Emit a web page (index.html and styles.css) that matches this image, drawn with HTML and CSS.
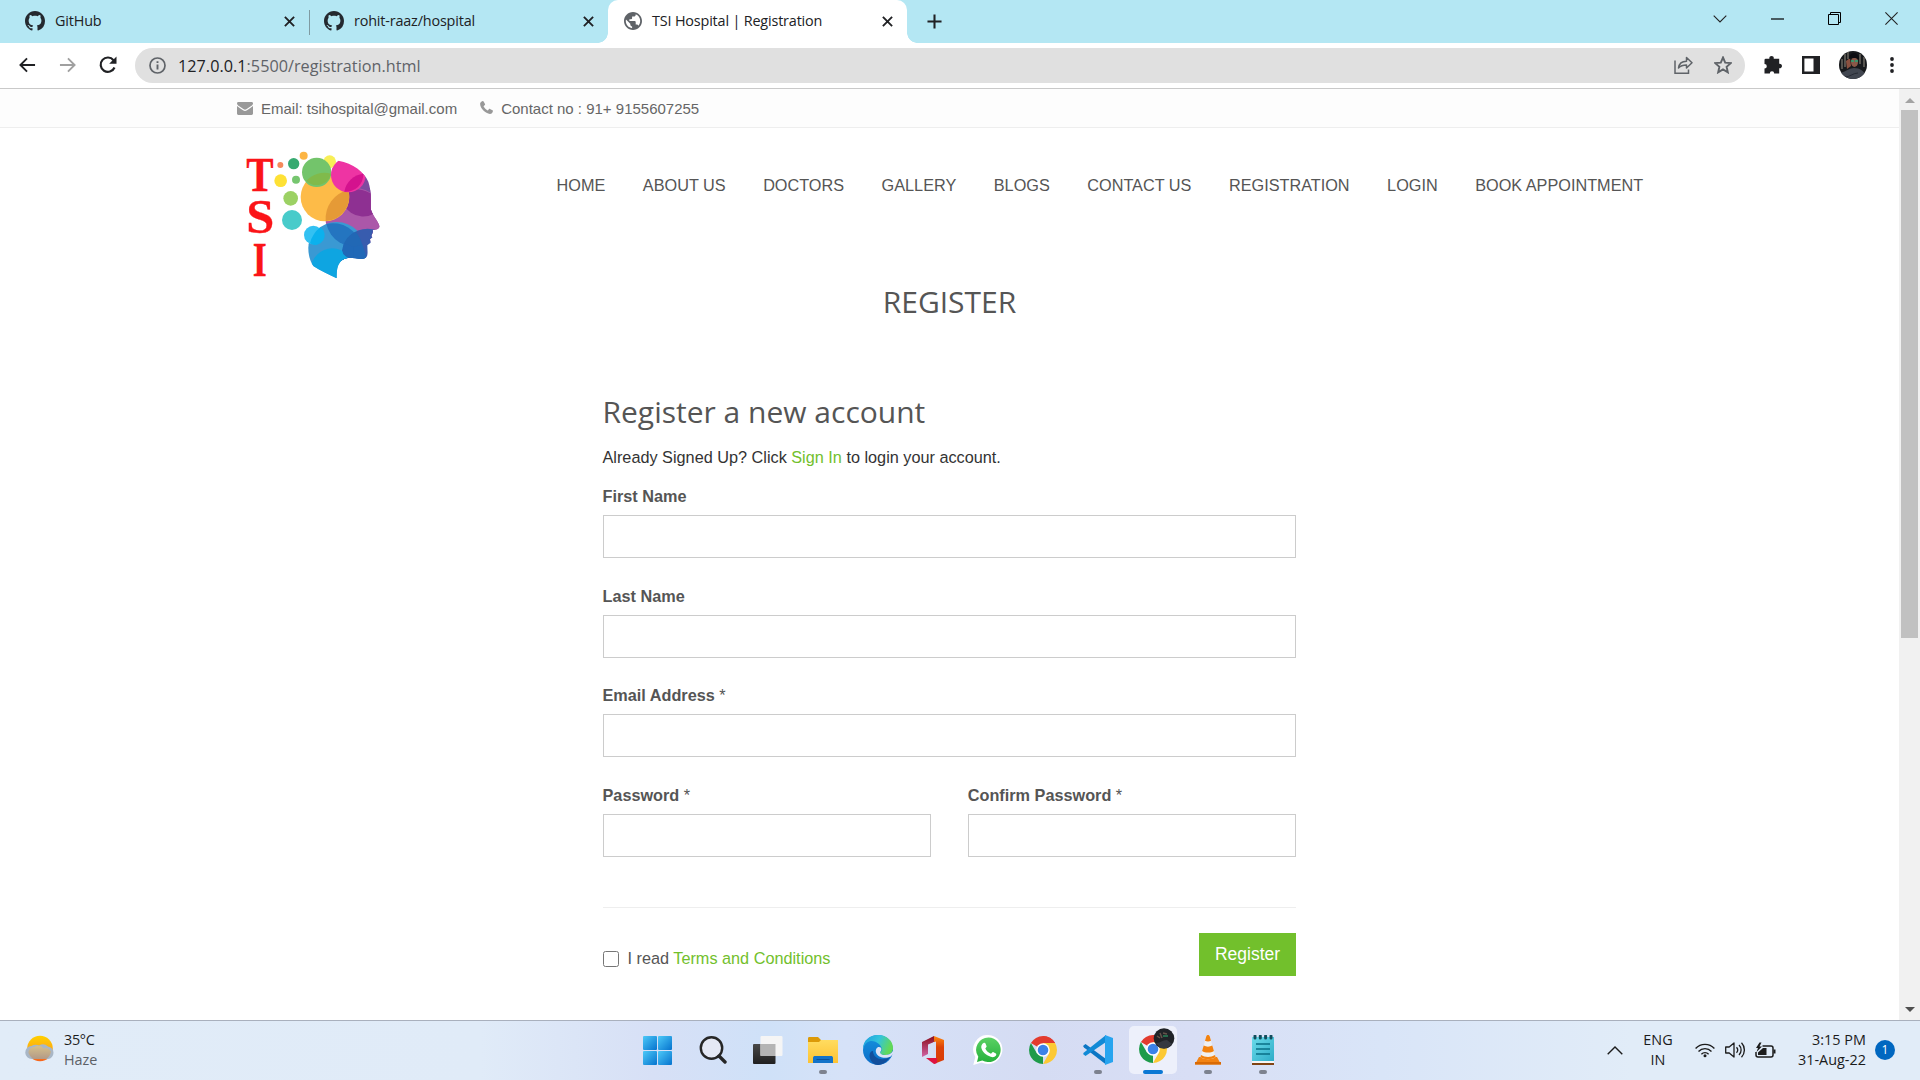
FILE: index.html
```html
<!DOCTYPE html>
<html lang="en">
<head>
<meta charset="utf-8">
<title>TSI Hospital | Registration</title>
<link rel="stylesheet" href="styles.css">
</head>
<body>
<svg class="defs" width="0" height="0" aria-hidden="true">
  <defs>
    <symbol id="github" viewBox="0 0 16 16"><path fill="#24292f" d="M8 0C3.58 0 0 3.58 0 8c0 3.54 2.29 6.53 5.47 7.59.4.07.55-.17.55-.38 0-.19-.01-.82-.01-1.49-2.01.37-2.53-.49-2.69-.94-.09-.23-.48-.94-.82-1.13-.28-.15-.68-.52-.01-.53.63-.01 1.08.58 1.23.82.72 1.21 1.87.87 2.33.66.07-.52.28-.87.51-1.07-1.78-.2-3.64-.89-3.64-3.95 0-.87.31-1.59.82-2.15-.08-.2-.36-1.02.08-2.12 0 0 .67-.21 2.2.82.64-.18 1.32-.27 2-.27s1.36.09 2 .27c1.53-1.04 2.2-.82 2.2-.82.44 1.1.16 1.92.08 2.12.51.56.82 1.27.82 2.15 0 3.07-1.87 3.75-3.65 3.95.29.25.54.73.54 1.48 0 1.07-.01 1.93-.01 2.2 0 .21.15.46.55.38A8.01 8.01 0 0 0 16 8c0-4.42-3.58-8-8-8z"/></symbol>
    <symbol id="close" viewBox="0 0 10 10"><path d="M.8.8l8.4 8.4M9.2.8L.8 9.2" stroke="#202124" stroke-width="1.7" fill="none"/></symbol>
    <symbol id="chrome" viewBox="0 0 28 28">
      <path fill="#e33b2e" d="M14 14L1.9 7A14 14 0 0 1 26.1 7z"/>
      <path fill="#1e9b4a" d="M14 14v14A14 14 0 0 1 1.9 7l6.1 10.500z"/>
      <path fill="#fcc934" d="M14 14V7h12.100A14 14 0 0 1 14 28l6-10.500z"/>
      <path fill="#e33b2e" d="M14 7h12.100A14 14 0 0 0 14 0z"/>
      <circle cx="14" cy="14" r="6.800" fill="#fff"/><circle cx="14" cy="14" r="5.300" fill="#3b82e8"/>
    </symbol>
    <linearGradient id="winG" x1="0" y1="0" x2="1" y2="1"><stop offset="0" stop-color="#4cc9f8"/><stop offset="1" stop-color="#0673ce"/></linearGradient>
    <linearGradient id="folderG" x1="0" y1="0" x2="0" y2="1"><stop offset="0" stop-color="#ffdc60"/><stop offset="1" stop-color="#fdc232"/></linearGradient>
    <linearGradient id="edgeA" x1="0" y1="0" x2="1" y2=".3"><stop offset="0" stop-color="#1d9de0"/><stop offset=".55" stop-color="#33c4dc"/><stop offset="1" stop-color="#62d957"/></linearGradient>
    <linearGradient id="edgeB" x1="0" y1="0" x2="0" y2="1"><stop offset="0" stop-color="#1593de"/><stop offset="1" stop-color="#0c6cc8"/></linearGradient>
    <linearGradient id="officeA" x1="0" y1="0" x2="0" y2="1"><stop offset="0" stop-color="#8c0d1c"/><stop offset="1" stop-color="#d064a6"/></linearGradient>
    <linearGradient id="officeB" x1="0" y1="0" x2="0" y2="1"><stop offset="0" stop-color="#ff8a10"/><stop offset=".4" stop-color="#dd4208"/><stop offset="1" stop-color="#d93b06"/></linearGradient>
    <linearGradient id="waG" x1="0" y1="0" x2="0" y2="1"><stop offset="0" stop-color="#5bd164"/><stop offset="1" stop-color="#26b13c"/></linearGradient>
    <linearGradient id="sunG" x1="0" y1="0" x2="0" y2="1"><stop offset="0" stop-color="#ffd000"/><stop offset=".5" stop-color="#fdae10"/><stop offset="1" stop-color="#f7621c"/></linearGradient>
    <linearGradient id="cloudG" x1="0" y1="0" x2="0" y2="1"><stop offset="0" stop-color="#d6c08a"/><stop offset="1" stop-color="#b29a88"/></linearGradient>
    <linearGradient id="darkG" x1="0" y1="0" x2="0" y2="1"><stop offset="0" stop-color="#484848"/><stop offset="1" stop-color="#202020"/></linearGradient>
    <linearGradient id="noteG" x1="0" y1="0" x2="1" y2="1"><stop offset="0" stop-color="#6bdbea"/><stop offset="1" stop-color="#2eacc8"/></linearGradient>
  </defs>
</svg>

<header class="tabs">
  <div class="tab tab-first"><svg class="fav"><use href="#github"/></svg><span class="tab-title">GitHub</span><svg class="x"><use href="#close"/></svg></div>
  <div class="tab tab-second"><svg class="fav"><use href="#github"/></svg><span class="tab-title">rohit-raaz/hospital</span><svg class="x"><use href="#close"/></svg></div>
  <div class="tab tab-active">
    <svg class="fav globe" viewBox="2 2 20 20"><path fill="#5f6368" d="M12 2C6.480 2 2 6.480 2 12s4.480 10 10 10 10-4.480 10-10S17.520 2 12 2zm-1 17.930c-3.950-.49-7-3.850-7-7.930 0-.62.08-1.210.21-1.790L9 15v1c0 1.100.9 2 2 2v1.930zm6.900-2.540c-.26-.81-1-1.390-1.900-1.390h-1v-3c0-.55-.45-1-1-1H8v-2h2c.55 0 1-.45 1-1V7h2c1.100 0 2-.9 2-2v-.41c2.930 1.190 5 4.060 5 7.410 0 2.080-.8 3.970-2.100 5.390z"/></svg>
    <span class="tab-title">TSI Hospital | Registration</span><svg class="x"><use href="#close"/></svg>
  </div>
  <svg class="new-tab" viewBox="0 0 16 16"><path d="M8 .5v15M.5 8h15" stroke="#202124" stroke-width="2.200"/></svg>
  <div class="win-buttons">
    <svg width="14" height="8" viewBox="0 0 14 8"><path d="M.7.7L7 7l6.300-6.300" fill="none" stroke="#222" stroke-width="1.100"/></svg>
    <svg width="13" height="2" viewBox="0 0 13 2"><path d="M0 1h13" stroke="#000" stroke-width="1.200"/></svg>
    <svg width="13" height="13" viewBox="0 0 13 13"><path d="M.5 2.500h10v10H.5zM2.500 2.500v-2h10v10h-2" fill="none" stroke="#000"/></svg>
    <svg width="13" height="13" viewBox="0 0 13 13"><path d="M.4.4l12.200 12.200M12.600.4L.4 12.600" stroke="#222" stroke-width="1.100"/></svg>
  </div>
</header>

<div class="toolbar">
  <div class="nav-icons">
    <svg width="17" height="16" viewBox="0 0 18 16" fill="none" stroke="#202124" stroke-width="2"><path d="M17 8H2M8.500 1L1.500 8l7 7"/></svg>
    <svg width="17" height="16" viewBox="0 0 18 16" fill="none" stroke="#a0a0a0" stroke-width="2"><path d="M1 8h15M9.500 1l7 7-7 7"/></svg>
    <svg width="18" height="18" viewBox="0 0 18 18"><path d="M15.500 11.500A7.200 7.200 0 1 1 14.500 4.200" fill="none" stroke="#202124" stroke-width="2.200"/><path d="M17.500.5v7.300h-7.300z" fill="#202124"/></svg>
  </div>
  <div class="address">
    <svg class="info" viewBox="0 0 17 17"><circle cx="8.500" cy="8.500" r="7.500" fill="none" stroke="#5f6368" stroke-width="1.700"/><path d="M8.500 7.500v5M8.500 4.200v1.900" stroke="#5f6368" stroke-width="1.900"/></svg>
    <span class="url"><b>127.0.0.1</b>:5500/registration.html</span>
    <svg class="share" viewBox="0 0 19 18" fill="none" stroke="#5f6368" stroke-width="1.500"><path d="M1 4.500v12.700h13.500v-3.700"/><path d="M4.500 12c.6-4.300 3.500-6.700 8-6.700V1.500l5.500 5.300-5.500 5.200V9c-3.500 0-6 .8-8 3z" stroke-linejoin="round"/></svg>
    <svg class="star" viewBox="0 0 18 18" fill="none" stroke="#5f6368" stroke-width="1.900"><path d="M9 1.500l2.200 5.100 5.600.5-4.200 3.700 1.200 5.500L9 13.400l-4.800 2.900 1.200-5.500-4.200-3.700 5.600-.5z"/></svg>
  </div>
  <div class="extras">
    <svg width="18" height="18" viewBox="0 0 18 18"><path fill="#202124" d="M1.800 2.700H5.400a2.200 2.200 0 1 1 4.300 0h5.500v5a2.300 2.300 0 1 1 0 4.500v5.300h-5a2.200 2.200 0 0 0-4.400 0H.5v-4.900a2.300 2.300 0 0 0 0-4.600V4a1.300 1.300 0 0 1 1.300-1.300z"/></svg>
    <svg width="18" height="18" viewBox="0 0 18 18"><path d="M1.200 1.200h15.600v15.600H1.200z" fill="#fff" stroke="#202124" stroke-width="2.400"/><path d="M11.500 0H18v18h-6.500z" fill="#202124"/></svg>
    <svg width="28" height="28" viewBox="0 0 28 28"><clipPath id="av"><circle cx="14" cy="14" r="14"/></clipPath><g clip-path="url(#av)"><path fill="#17191c" d="M0 0h28v28H0z"/><path d="M3 8v10M6 3v13M9 1v7M21 3v10M25 6v10" stroke="#77736a" stroke-width="1.300"/><path d="M7 10l4-3 1 8-4 3z" fill="#8b5140"/><ellipse cx="15.500" cy="11" rx="3.500" ry="5" fill="#8a5848"/><path d="M10 8c0-8 11-8 10 1-3-3-7-2-10-1z" fill="#0d0d12"/><path d="M12 10h3M16 10h3" stroke="#25a776" stroke-width="1.500"/><path d="M1 22c7-2 10-5 14-5 6 0 10 3 13 9l-3 3H7z" fill="#414650"/><path d="M6 26c5 0 8-4 13-4" stroke="#272b34" fill="none"/></g></svg>
    <svg class="dots" width="4" height="16" viewBox="0 0 4 16" fill="#202124"><circle cx="2" cy="2" r="1.900"/><circle cx="2" cy="8" r="1.900"/><circle cx="2" cy="14" r="1.900"/></svg>
  </div>
</div>

<div class="viewport">
  <div class="page">
    <div class="contact-bar">
      <svg class="mail" viewBox="0 0 16 13" fill="#999"><path d="M0 1.400C0 .6.600 0 1.400 0h13.200c.8 0 1.400.6 1.400 1.400 0 .8-.5 1.500-1.200 2L9.300 7.300c-.9.600-1.700.6-2.600 0L1.200 3.400C.5 2.900 0 2.200 0 1.400z"/><path d="M0 4c2 1.500 4 2.800 6 4.300 1.300.9 2.700.9 4 0C12 6.800 14 5.500 16 4v7.600c0 .8-.6 1.400-1.400 1.400H1.400C.6 13 0 12.400 0 11.600z"/></svg>
      <span class="contact-mail">Email: tsihospital@gmail.com</span>
      <svg class="phone" viewBox="0 0 13 13"><path fill="#999" d="M2.700.1c.4-.2.700 0 .9.400L5 3c.2.500.1.800-.2 1.100l-1 .9c-.2.300-.2.500 0 .8.900 1.500 2 2.600 3.500 3.500.3.200.6.200.8-.1l.9-1.100c.3-.3.600-.4 1-.2l2.500 1.400c.4.200.5.500.4.900-.3 1.600-1.300 2.700-3 2.700C5.500 12.500.3 7.500.1 3 .1 1.700 1.100.6 2.700.1z"/></svg>
      <span>Contact no : 91+ 9155607255</span>
    </div>
    <div class="site-header">
      <svg class="logo" viewBox="0 0 600 480">
        <g fill="#fb1418" stroke="#fb1418" stroke-width="1" font-family="'Liberation Serif', serif" font-weight="700" text-anchor="middle">
          <text x="120" y="182" font-size="146" textLength="82" lengthAdjust="spacingAndGlyphs">T</text>
          <text x="121" y="308" font-size="144" textLength="84" lengthAdjust="spacingAndGlyphs">S</text>
          <text x="119" y="437" font-size="146" textLength="42" lengthAdjust="spacingAndGlyphs">I</text>
        </g>
        <clipPath id="head"><path d="M200 50L355 92C400 100 432 125 445 155C455 185 452 210 453 240C460 260 476 275 479 290C476 297 468 299 458 300L459 305L454 318L457 322L450 328L452 338L442 346C442 368 448 386 425 387C400 385 380 380 366 391C350 404 350 425 350 445C325 432 300 422 280 408C268 390 264 370 265 345L240 280z"/></clipPath>
        <circle cx="181" cy="105" r="9" fill="#f58a5b"/><circle cx="221" cy="101" r="17" fill="#36aa70"/><circle cx="251" cy="77" r="12" fill="#fcb544"/>
        <circle cx="182" cy="152" r="19" fill="#fee135"/><circle cx="228" cy="149" r="12" fill="#76c66f"/><circle cx="212" cy="205" r="22" fill="#9cd164"/><circle cx="216" cy="270" r="30" fill="#48cbca"/>
        <circle cx="329" cy="95" r="19" fill="#f8ef57"/>
        <g clip-path="url(#head)">
          <path fill="#a855a8" d="M385 180H480V320H400z"/>
          <circle cx="426" cy="195" r="65" fill="#7e4b9f"/>
          <circle cx="404" cy="262" r="88" fill="#ab57a9"/>
          <path fill="#8e3092" d="M365 187A88 88 0 0 1 460 196V252A65 65 0 0 1 365 187z"/>
        </g>
        <circle cx="315" cy="201" r="73" fill="#fdbb48"/>
        <path fill="#e59a36" d="M317 273A88 88 0 0 1 385 180A73 73 0 0 1 317 273z"/>
        <circle cx="290" cy="127" r="44" fill="#73c46b"/>
        <path fill="#80ba4b" d="M259 152A73 73 0 0 1 333 131A44 44 0 0 1 259 152z"/>
        <g clip-path="url(#head)">
          <circle cx="385" cy="135" r="52" fill="#ee34a3"/>
          <path fill="#d4128e" d="M373 185A65 65 0 0 1 430 131A52 52 0 0 1 373 185z"/>
          <circle cx="350" cy="363" r="87" fill="#3a99d3"/>
          <path fill="#2475c0" d="M319 282A87 87 0 0 1 424 348A88 88 0 0 1 319 282z"/>
          <circle cx="443" cy="372" r="76" fill="#385cae"/>
          <path fill="#2068b7" d="M369 352Q402 354 427 343L436 370L440 392H360z"/>
          <path fill="#2168b5" d="M368 353Q376 318 407 305Q420 320 427 344Q400 354 368 353z"/>
          <circle cx="337" cy="420" r="65" fill="#0ea5e1"/>
          <path fill="#2068b7" d="M367 363Q368 352 372 340L400 350V392H362Q378 384 388 386Q368 376 367 363z"/>
        </g>
        <circle cx="280" cy="315" r="28" fill="#33c1f2"/><path fill="#0bb1ed" d="M270 340A87 87 0 0 1 301 292A28 28 0 0 1 270 340z"/>
      </svg>
      <nav class="menu"><a>HOME</a><a>ABOUT US</a><a>DOCTORS</a><a>GALLERY</a><a>BLOGS</a><a>CONTACT US</a><a>REGISTRATION</a><a>LOGIN</a><a>BOOK APPOINTMENT</a></nav>
    </div>
    <h1>REGISTER</h1>
    <form class="register">
      <h2>Register a new account</h2>
      <p>Already Signed Up? Click <a>Sign In</a> to login your account.</p>
      <div class="field"><label>First Name</label><input type="text"></div>
      <div class="field"><label>Last Name</label><input type="text"></div>
      <div class="field"><label>Email Address <i>*</i></label><input type="text"></div>
      <div class="pair">
        <div class="field"><label>Password <i>*</i></label><input type="password"></div>
        <div class="field"><label>Confirm Password <i>*</i></label><input type="password"></div>
      </div>
      <div class="actions">
        <label class="terms"><input type="checkbox"><span>I read <a>Terms and Conditions</a></span></label>
        <button type="button">Register</button>
      </div>
    </form>
  </div>
  <div class="scrollbar"><span class="arrow up"></span><span class="thumb"></span><span class="arrow down"></span></div>
</div>

<footer class="taskbar">
  <div class="weather">
    <svg width="30" height="28" viewBox="0 0 30 28"><circle cx="15" cy="13.500" r="12.800" fill="url(#sunG)"/><path fill="#a8b6c6" d="M7 24a6.500 6.500 0 0 1-.5-13 8 8 0 0 1 7.500-.500 7.500 7.500 0 0 1 9 1 6.300 6.300 0 0 1 0 12.500z"/><path fill="url(#cloudG)" d="M3.500 18c0-4 3-6 6-6 3-2.500 8-1 9 1.500 3-1.500 6 .5 7.500 3a12 12 0 0 1-4.500 7.500H8A12 12 0 0 1 3.500 18z"/></svg>
    <div><div>35°C</div><div class="muted">Haze</div></div>
  </div>
  <div class="apps">
    <div class="app"><svg width="29" height="29" viewBox="0 0 29 29" fill="url(#winG)"><rect width="14" height="14" rx="1"/><rect x="15" width="14" height="14" rx="1"/><rect y="15" width="14" height="14" rx="1"/><rect x="15" y="15" width="14" height="14" rx="1"/></svg></div>
    <div class="app"><svg width="28" height="28" viewBox="0 0 28 28" fill="none" stroke="#262626"><circle cx="12.500" cy="12" r="10.700" fill="#e4e8f4" stroke-width="2.400"/><path d="M20 20l6 6" stroke-width="3.400" stroke-linecap="round"/></svg></div>
    <div class="app"><svg width="30" height="28" viewBox="0 0 30 28"><rect y="8" width="22.500" height="20" rx="1" fill="url(#darkG)"/><rect x="7.500" y="0" width="22" height="20" rx="1" fill="#f5f5f5"/><path d="M7.500 8h15v12h-15z" fill="#b4b4b4"/></svg></div>
    <div class="app running"><svg width="30" height="28" viewBox="0 0 30 28"><path fill="#dc9a08" d="M0 2.500C0 1.500.5 1 1.500 1H10l3 3h16c.6 0 1 .4 1 1v5H0z"/><path fill="url(#folderG)" d="M0 6h11l2-2h17v23H0z"/><path fill="#1373c9" d="M5 27v-5c0-1.500 1-2 2-2h16c1 0 2 .5 2 2v5z"/><path d="M8.500 23.500h13" stroke="#0a529b"/></svg></div>
    <div class="app"><svg width="30" height="30" viewBox="0 0 30 30"><circle cx="15" cy="15" r="15" fill="url(#edgeB)"/><path fill="#124f9c" d="M10 16c0 6 6 9 11 8 3 0 5-1.500 6.500-3C24 28 18 31 12 29.500 4 24 6 16 10 16z"/><path fill="url(#edgeA)" d="M0 14C0 5 7 0 15 0c9 0 15 6 15 13 0 5-4 7-8 7-3 0-5-1-5-2 0-.800 1.800-1.400 1.800-4C18.800 9 5-1 0 14z"/><path fill="#dce2f6" d="M17.500 16.500C16.500 18 17.800 20 22 20c3 0 6-1 8-4v3l-2.300 2.500C23 24 14.500 23 13 17.500c-.8-3 .8-5.500 3-5.500 3 0 2.700 3 1.500 4.500z"/></svg></div>
    <div class="app"><svg width="24" height="28" viewBox="0 0 24 28"><path fill="url(#officeA)" d="M1 6L13 0v6l-6 2.500V18l-6 3z"/><path fill="url(#officeB)" d="M13 0l10 4v20l-10 4z"/><path fill="#d6dcf4" d="M12 6.500l3-1V22H12z"/><path fill="#de1240" d="M5 22h11v5l-3 1z"/></svg></div>
    <div class="app"><svg width="30" height="30" viewBox="0 0 30 30"><path fill="#fff" d="M15.500 0a14.500 14.500 0 1 1-7 27.500L.3 30l2-8A14.500 14.500 0 0 1 15.500 0z"/><path fill="url(#waG)" d="M15.500 2.500a12.300 12.300 0 1 1-6.200 23L4 27l1.300-5.300A12.300 12.300 0 0 1 15.500 2.500z"/><path fill="#fff" d="M10.500 8c1-.5 1.700-.2 2 .6l1.100 2.700c.2.600-.8 1.600-1.300 2.200 1.200 2.500 3 4.200 5.700 5.200.7-.6 1.500-2 2.100-1.700l2.800 1.400c.7.500.4 1.700-.1 2.400-1 1.300-3 1.700-5 1-5-1.500-8.500-5-9.500-9-.3-2 .7-4 2.200-4.800z"/></svg></div>
    <div class="app"><svg width="28" height="28"><use href="#chrome"/></svg></div>
    <div class="app running"><svg width="30" height="30" viewBox="0 0 30 30"><path fill="#0b76c4" d="M0 11l2.500-2L23 24v5.500L1 12.500z"/><path fill="#118ad6" d="M0 19l2.500 2L23 7V0L1 17.500z"/><path fill="#27a4ef" d="M22 0l8 3v24l-8 3z"/></svg></div>
    <div class="app current"><div class="tile"><svg width="36" height="38" viewBox="0 0 36 38"><use href="#chrome" x="0" y="7" width="28" height="28"/><circle cx="25" cy="10.500" r="10.300" fill="#202327"/><path d="M18 8l3 2M21 5l2 5M24 5l4 1" stroke="#65544b" stroke-width="1.500"/><path d="M24 8h5" stroke="#2b9b67" stroke-width="1.200"/><path d="M17 15c5 0 6-3 11-3l5 4-5 4h-7z" fill="#343840"/></svg></div></div>
    <div class="app running"><svg width="26" height="30" viewBox="0 0 26 30"><path fill="#f28313" d="M4 22h18l4 7.500H0z"/><path fill="#d96a05" d="M0 27h26v2.500H0z"/><path fill="#f0f0f0" d="M13 0c1 0 1.500.5 1.700 1.300L20.500 22c-3 3-12 3-15 0L11.300 1.300C11.500.5 12 0 13 0z"/><path fill="#f2820f" d="M11.300 1.300c.5-1.700 2.900-1.700 3.400 0l1.300 4.500c-1.600 1-4.400 1-6 0zM8.700 10.500c2.500 1.500 6 1.500 8.600 0l1.600 5.500c-3 2-8.800 2-11.800 0zM6 20l-.5 2c3 3 12 3 15 0l-.5-2c-4 2.500-10 2.500-14 0z"/></svg></div>
    <div class="app running"><svg width="24" height="30" viewBox="0 0 24 30"><path fill="#804414" d="M1 27h22v3H1z"/><path fill="#f5f5f5" d="M1 25h22v3H1z"/><path fill="url(#noteG)" d="M1 2h22v24H1z"/><path d="M5 9h14M5 14h14M5 19h14" stroke="#096f86" stroke-width="1.700"/><path d="M4 1v2M9.300 1v2M14.600 1v2M20 1v2" stroke="#124d5c" stroke-width="3" stroke-linecap="round"/></svg></div>
  </div>
  <div class="tray">
    <svg class="chev" width="16" height="9" viewBox="0 0 16 9"><path d="M.7 8.300L8 1l7.300 7.300" fill="none" stroke="#1c1c1c" stroke-width="1.400"/></svg>
    <div class="lang">ENG<br>IN</div>
    <svg class="wifi" width="20" height="16" viewBox="0 0 20 16" fill="none" stroke="#1c1c1c" stroke-width="1.400"><path d="M.6 6.400a13 13 0 0 1 18.800 0M3.500 9.400a9 9 0 0 1 13 0M6.400 12.200a5 5 0 0 1 7.200 0"/><circle cx="10" cy="13.800" r="1.500" fill="#1c1c1c" stroke="none"/></svg>
    <svg class="vol" width="20" height="18" viewBox="0 0 20 18" fill="none" stroke="#1c1c1c" stroke-width="1.300"><path d="M.7 6h3.500L9 2v14l-4.800-4H.7z" stroke-linejoin="round"/><path d="M11.500 6.300a4 4 0 0 1 0 5.400M14 4a7 7 0 0 1 0 10M16.500 1.800a10.500 10.500 0 0 1 0 14.400"/></svg>
    <svg class="bat" width="21" height="17" viewBox="0 0 21 17"><path d="M7.500 4H16a2 2 0 0 1 2 2v7a2 2 0 0 1-2 2H3a2 2 0 0 1-2-2v-3" fill="none" stroke="#1c1c1c" stroke-width="1.500"/><path d="M8 6h3.500v7H3v-2.500zM18.500 7.500h2v4h-2zM4.500.5L1 6h2L1.500 10 7 4.500H4.500l2-4z" fill="#1c1c1c"/></svg>
    <div class="clock">3:15 PM<br>31-Aug-22</div>
    <span class="badge">1</span>
  </div>
</footer>
</body>
</html>
```

FILE: styles.css
```css
* { box-sizing: border-box; }
body {
  margin: 0;
  width: 1920px;
  height: 1080px;
  overflow: hidden;
  display: flex;
  flex-direction: column;
  background: #fff;
  font-family: "Liberation Sans", Arial, sans-serif;
  font-size: 16.25px;
  color: #555;
}
svg { display: block; flex: none; }
.defs { position: absolute; }

/* tab strip */
.tabs {
  height: 43px;
  flex: none;
  display: flex;
  background: #b4e7f3;
  font: 14.4px/42px "Open Sans", "Noto Sans", sans-serif;
  color: #202124;
}
.tab { display: flex; align-items: center; height: 42px; }
.tab-first { width: 309px; padding: 0 14px 0 25px; }
.tab-second {
  width: 299px;
  padding: 0 14px 0 15px;
  background: linear-gradient(#7f9ba2, #7f9ba2) 0 10px / 1px 25px no-repeat;
}
.tab-active {
  position: relative;
  width: 299px;
  height: 43px;
  padding: 0 14px 1px 16px;
  background: #fff;
  border-radius: 10px 10px 0 0;
}
.tab-active::before, .tab-active::after {
  content: "";
  position: absolute;
  bottom: 0;
  width: 10px;
  height: 10px;
}
.tab-active::before { left: -10px; background: radial-gradient(circle at 0 0, #b4e7f3 9.5px, #fff 10px); }
.tab-active::after { right: -10px; background: radial-gradient(circle at 100% 0, #b4e7f3 9.5px, #fff 10px); }
.fav { width: 20px; height: 20px; }
.globe { width: 18px; height: 18px; }
.tab-title { flex: 1; margin-left: 10px; letter-spacing: -0.17px; }
.tab .x { width: 11px; height: 11px; }
.new-tab { width: 15px; height: 15px; margin: 14px 0 0 20px; }
.win-buttons { margin-left: auto; display: flex; align-items: center; gap: 44px; height: 37px; padding-right: 22px; }

/* toolbar */
.toolbar {
  height: 46px;
  flex: none;
  display: flex;
  align-items: center;
  padding: 0 26px 1px 19px;
  border-bottom: 1px solid #c9c9c9;
}
.nav-icons { display: flex; align-items: center; gap: 23px; width: 116px; }
.address {
  width: 1610px;
  height: 35px;
  display: flex;
  align-items: center;
  padding: 0 13px 0 14px;
  border-radius: 18px;
  background: #e0e0e0;
}
.info { width: 17px; height: 17px; }
.url { margin: 1px 0 0 12px; font: 16.2px "Open Sans", "Noto Sans", sans-serif; letter-spacing: 0.03px; color: #5f6368; }
.url b { font-weight: 400; color: #202124; }
.share { width: 19px; height: 18px; margin-left: auto; }
.star { width: 18px; height: 18px; margin-left: 21px; }
.extras { flex: 1; display: flex; align-items: center; justify-content: space-between; padding-left: 19px; }
.dots { margin-left: 3px; }

/* page */
.viewport { flex: 1; min-height: 0; display: flex; }
.page { flex: 1; overflow: hidden; background: #fff; }
.contact-bar {
  display: flex;
  align-items: center;
  height: 39px;
  padding: 0 0 0 237px;
  border-bottom: 1px solid #eee;
  background: #fdfdfd;
  font-size: 15px;
  color: #666;
}
.mail { width: 16px; height: 13px; margin-right: 8px; }
.phone { width: 13px; height: 13px; margin: -2px 8px 0 23px; }
.site-header { display: flex; height: 162px; padding: 2px 0 0 220px; }
.logo { width: 200px; height: 160px; }
.menu { display: flex; gap: 37.5px; margin-left: 136.6px; padding-top: 45px; line-height: 20px; white-space: nowrap; }
h1, h2 { margin: 0; font: 400 30px/36px "Open Sans", sans-serif; color: #555; }
h1 { text-align: center; margin-top: -6px; }
.register { width: 693.5px; margin: 74px 0 0 602.5px; }
p { margin: 17px 0 0; line-height: 20px; color: #333; }
a { color: inherit; }
p a, .terms a { color: #72c02c; }
.field { display: flex; flex-direction: column; height: 99.7px; }
.field label { font-weight: 700; line-height: 20px; margin-bottom: 9px; }
.field i { font-style: normal; font-weight: 400; }
.field input { width: 100%; height: 43px; border: 1px solid #ccc; border-radius: 0; background: #fff; }
p + .field { margin-top: 19px; }
.pair { display: grid; grid-template-columns: 1fr 1fr; gap: 37px; }
.actions {
  display: flex;
  justify-content: space-between;
  height: 70px;
  margin-top: 22px;
  padding-top: 25px;
  border-top: 1px solid #eee;
}
.terms { display: flex; align-items: center; gap: 9px; height: 52px; }
.terms input { width: 16px; height: 16px; margin: 0; }
button { width: 97px; height: 43px; border: 0; padding: 0; background: #72c02c; color: #fff; font: 17.5px "Liberation Sans", sans-serif; }

.scrollbar { width: 21px; background: #f1f1f1; display: flex; flex-direction: column; align-items: center; padding: 9px 0 8px; }
.arrow { width: 0; height: 0; border: 5px solid transparent; }
.up { border-width: 0 5px 5px; border-bottom-color: #a3a3a3; }
.down { border-width: 5px 5px 0; border-top-color: #505050; margin-top: auto; }
.thumb { width: 17px; height: 528px; margin-top: 7px; background: #c1c1c1; }

/* taskbar */
.taskbar {
  flex: none;
  height: 60px;
  display: flex;
  border-top: 1px solid #a9b0bd;
  background: linear-gradient(90deg, #e1ecf8 0, #e0ebf8 25%, #d7e0f6 34%, #cfe1f8 40%, #d6e2f8 44%, #d5dcf3 54%, #d8def5 62%, #d9e5f8 72%, #e1ecf8 85%, #e1ecf8 100%);
  font: 14.4px/20px "Open Sans", "Noto Sans", sans-serif;
  color: #1b1b1b;
}
.weather { display: flex; gap: 9px; width: 630px; padding: 9px 0 0 25px; letter-spacing: -0.3px; }
.weather svg { margin-top: 5px; }
.muted { color: #5c6066; letter-spacing: 0; }
.apps { display: flex; width: 660px; }
.app { position: relative; width: 55px; height: 58px; display: flex; align-items: center; justify-content: center; }
.running::after, .current::after {
  content: "";
  position: absolute;
  left: 23.5px;
  bottom: 5px;
  width: 8px;
  height: 4px;
  border-radius: 2px;
  background: #7d828f;
}
.current::after { left: 17.5px; width: 20px; background: #0b78d4; }
.tile { width: 48px; height: 48px; padding: 2px 0 0 10px; border-radius: 5px; background: #edf0fb; }
.tray { flex: 1; display: flex; align-items: center; padding: 0 25px 1px 317px; }
.lang { width: 42px; margin-left: 14px; text-align: center; letter-spacing: 0; }
.wifi { margin-left: 16px; }
.vol { margin-left: 10px; }
.bat { margin-left: 10px; }
.clock { flex: 1; text-align: right; letter-spacing: 0.02px; white-space: nowrap; }
.badge { width: 20px; height: 20px; margin-left: 9px; border-radius: 50%; background: #0067c0; color: #fff; font-size: 12px; text-align: center; }
```
